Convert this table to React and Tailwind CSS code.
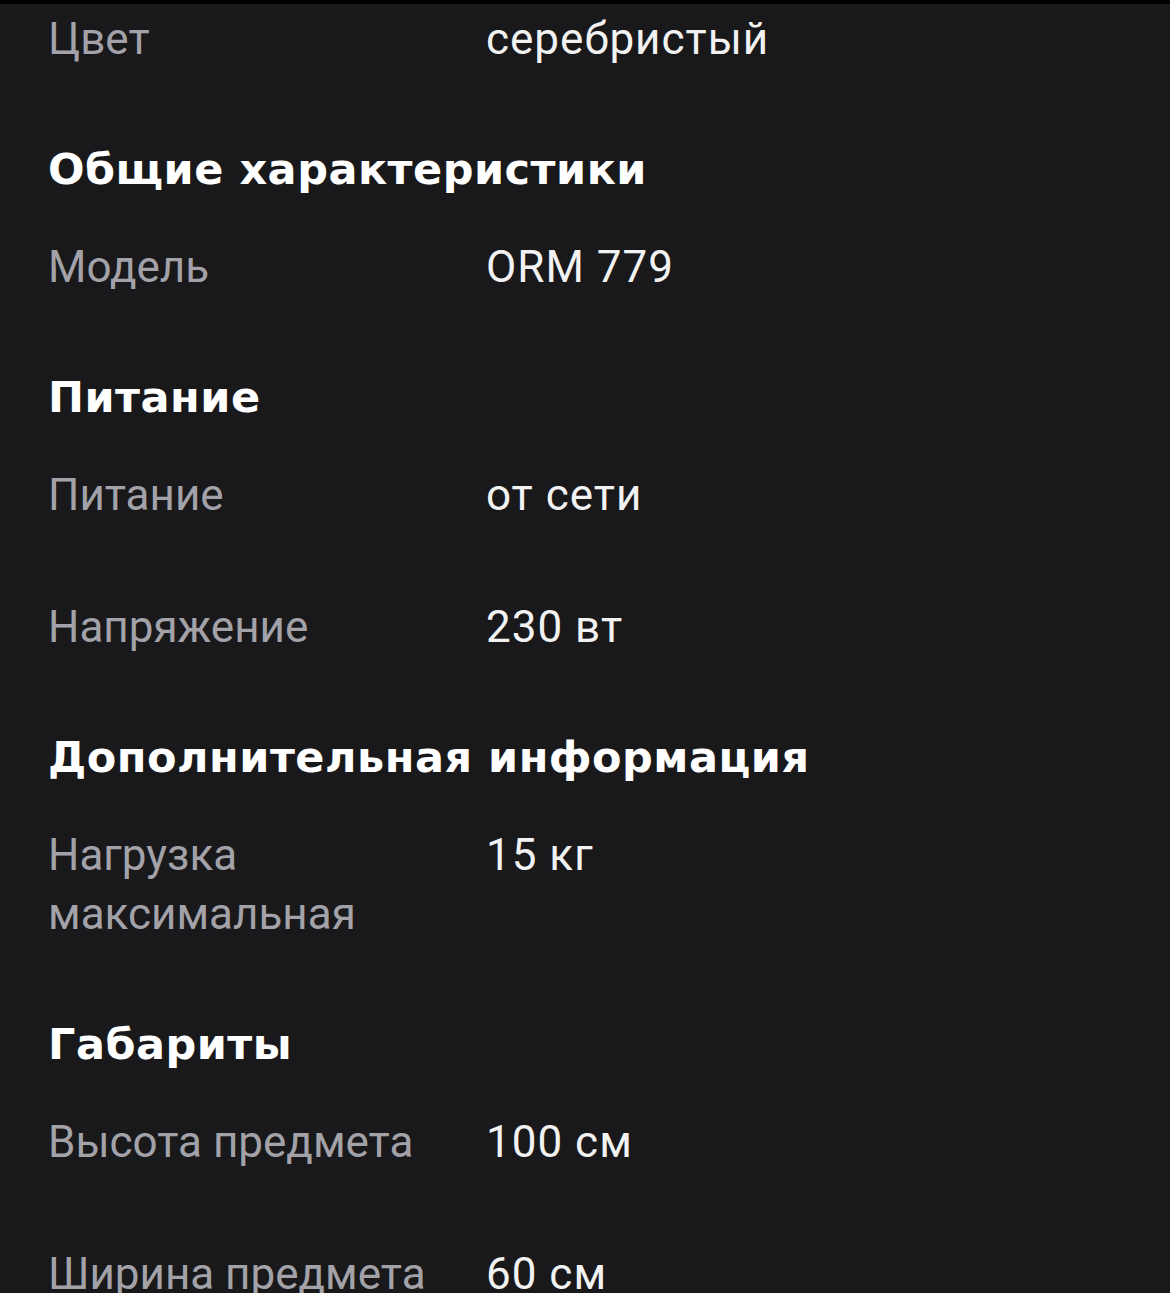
const sections = [
  { title: null, rows: [['Цвет', 'серебристый']] },
  { title: 'Общие характеристики', rows: [['Модель', 'ORM 779']] },
  { title: 'Питание', rows: [['Питание', 'от сети'], ['Напряжение', '230 вт']] },
  { title: 'Дополнительная информация', rows: [['Нагрузка максимальная', '15 кг']] },
  { title: 'Габариты', rows: [['Высота предмета', '100 см'], ['Ширина предмета', '60 см']] },
]

function Row({ label, value }) {
  return (
    <div className="grid grid-cols-[438px_1fr] text-[44px] leading-[59px]">
      <div className="pr-4 text-[#a2a2a8]">{label}</div>
      <div className="tracking-[1px] text-[#f2f2f2]">{value}</div>
    </div>
  )
}

export default function App() {
  return (
    <div className="h-[1293px] overflow-hidden bg-[#19191b] font-['Roboto',sans-serif]">
      <div className="h-[4px] bg-black" />
      <div className="flex flex-col gap-[71px] pl-[48px] pt-[6px]">
        {sections.map((section, i) => (
          <div key={i} className="flex flex-col gap-[39px]">
            {section.title && (
              <h2 className="font-['DejaVu_Sans',sans-serif] text-[43px] font-bold leading-[59px] tracking-[0.5px] text-white">{section.title}</h2>
            )}
            <div className="flex flex-col gap-[73px]">
              {section.rows.map(([label, value]) => (
                <Row key={label} label={label} value={value} />
              ))}
            </div>
          </div>
        ))}
      </div>
    </div>
  )
}
